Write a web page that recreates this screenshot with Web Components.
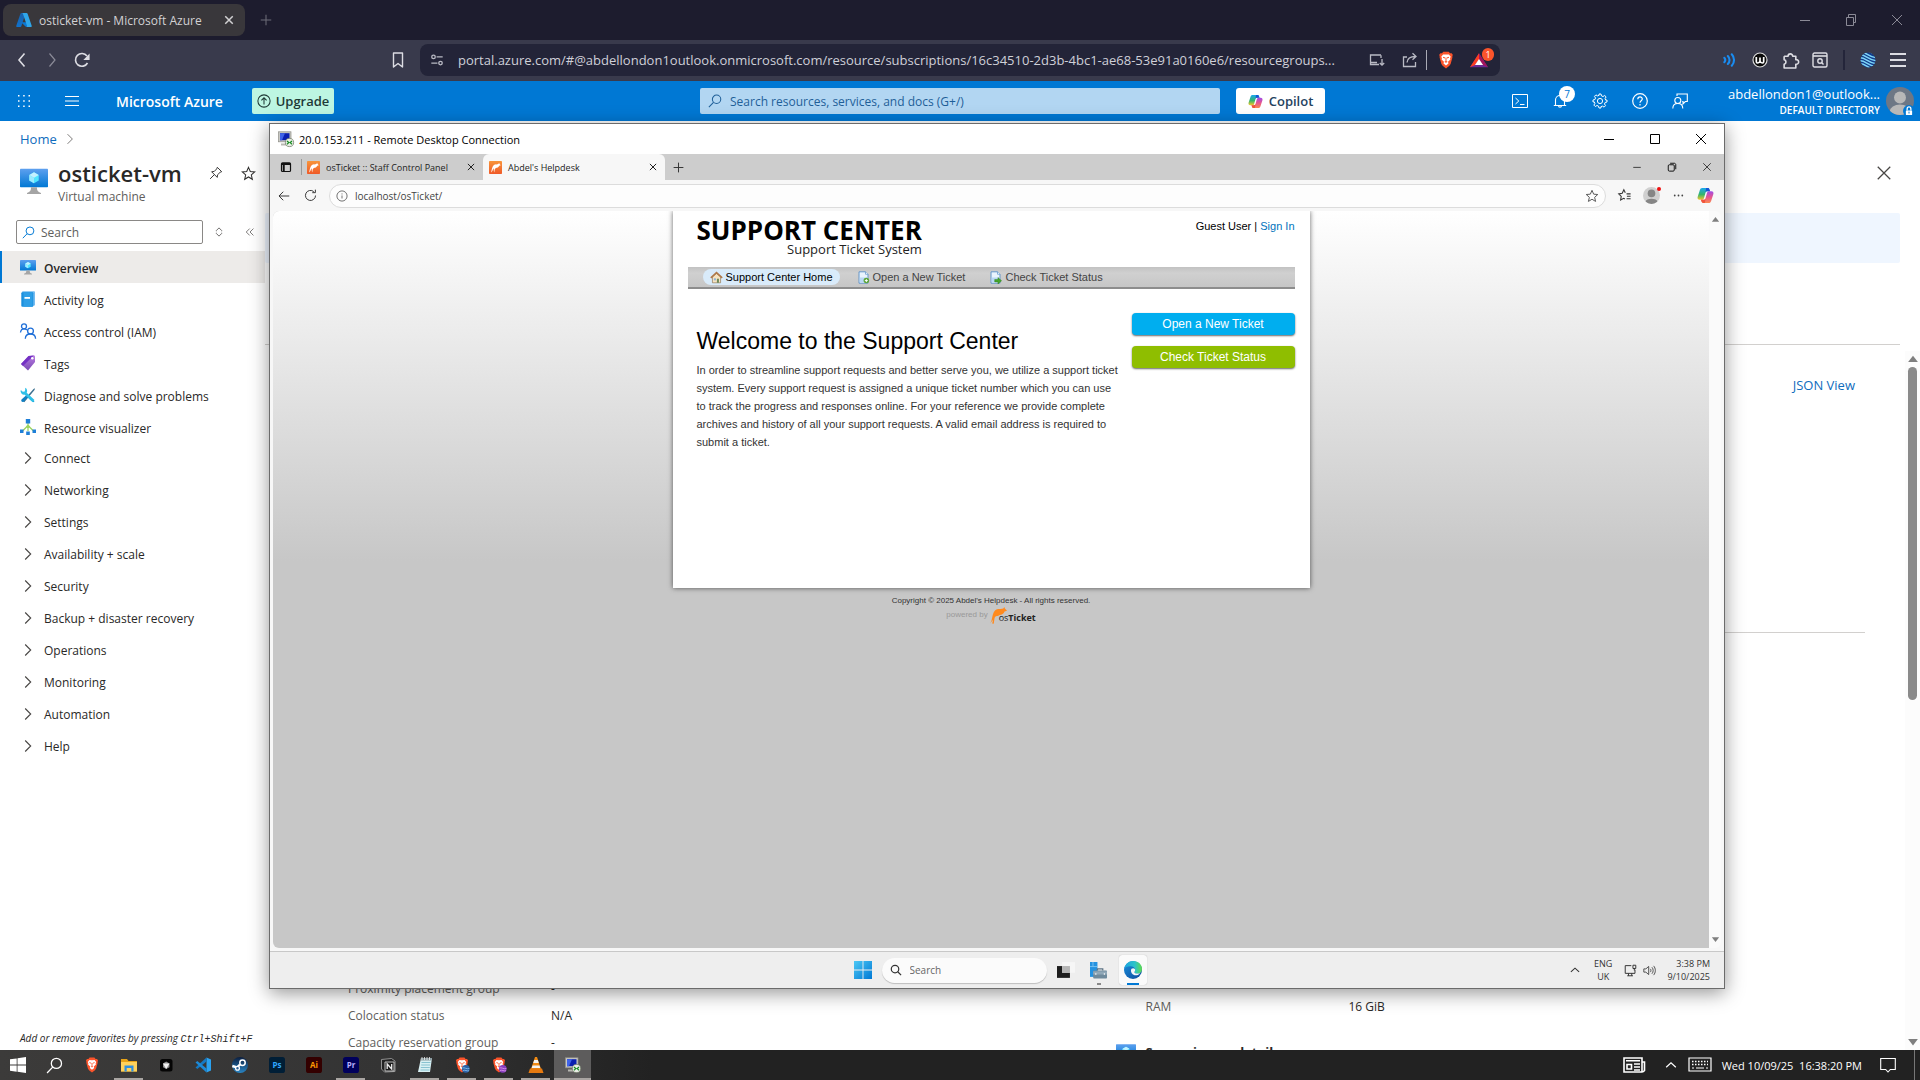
<!DOCTYPE html>
<html lang="en">
<head>
<meta charset="utf-8">
<title>osticket-vm - Microsoft Azure</title>
<style>
  html, body { margin: 0; height: 100%; }
  body { font-family: "Open Sans", "Noto Sans", sans-serif; font-size: 12px; color: #292827; overflow: hidden; background: #fff; }
</style>
</head>
<body>
<desktop-screen></desktop-screen>
<script>
const RESET = `
  *, *::before, *::after { box-sizing: border-box; }
  button, input { font: inherit; color: inherit; background: none; border: 0; padding: 0; margin: 0; outline: 0; }
  button { display: inline-flex; align-items: center; justify-content: center; flex: none; }
  input { min-width: 0; text-overflow: ellipsis; }
  a { color: inherit; text-decoration: none; }
  ul { list-style: none; margin: 0; padding: 0; }
  h1, h2, p, dl, dd, dt { margin: 0; font-weight: inherit; font-size: inherit; }
`;
function define(name, markup, setup) {
  const template = document.createElement('template');
  template.innerHTML = `<style>${RESET}</style>${markup}`;
  customElements.define(name, class extends HTMLElement {
    constructor() {
      super();
      this.attachShadow({ mode: 'open' }).append(template.content.cloneNode(true));
    }
    connectedCallback() { if (setup) setup(this, this.shadowRoot); }
  });
}

/* ---------- icons ---------- */
const line = (d, w = 1, vb = 16, extra = '') => `<svg viewBox="0 0 ${vb} ${vb}" fill="none" stroke="currentColor" stroke-width="${w}" ${extra}>${d}</svg>`;
const art = (d, vb = 16) => `<svg viewBox="0 0 ${vb} ${vb}">${d}</svg>`;
const LION = `<path d="M8 .6 10.4.6 11.6 2 13 1.9 14 3.3 13.6 5 13.7 5.8 12.1 11.6 11 13.2 8 15.5 5 13.2 3.9 11.6 2.3 5.8 2.4 5 2 3.3 3 1.9 4.4 2 5.6.6z" fill="#fb542b"/><path d="M8 3.2 10.6 3 12.2 5 11.6 6.4 11.9 7.6 9.8 9.6 10.2 11 8 12.8 5.8 11 6.2 9.6 4.1 7.6 4.4 6.4 3.8 5 5.4 3z" fill="#fff"/><path d="M5.4 5.6 7.2 6.2M10.6 5.6 8.8 6.2M8 6v3M6.9 9.3 8 10l1.1-.7" stroke="#fb542b" stroke-width=".9" fill="none"/>`;
const RDP = `<rect x=".5" y=".8" width="12.5" height="10" fill="#c9c9c4" stroke="#8f8f88" stroke-width=".7"/><rect x="2" y="2.2" width="9.5" height="7" fill="#0a1fb0"/><path d="M2 2.2h5L4 9.2H2z" fill="#3f63e8"/><path d="M3 12.5h8v2H3z" fill="#b8b8b2"/><circle cx="11.5" cy="11.5" r="4.1" fill="#e9eee6" stroke="#77806f" stroke-width=".8"/><path d="m9 10 1.8 1.6L9 13.2M14 10l-1.8 1.6 1.8 1.6" stroke="#178b22" stroke-width="1.2" fill="none"/>`;
const MONITOR = `<defs><linearGradient id="m" x1="0" y1="0" x2="0" y2="1"><stop offset="0" stop-color="#5ea0ef"/><stop offset="1" stop-color="#0078d4"/></linearGradient></defs><rect x="0" y="1" width="16" height="10.6" rx=".4" fill="url(#m)"/><path d="m8 3 2.7 1.6v3.1L8 9.3 5.3 7.7V4.6z" fill="#50e6ff"/><path d="m8 3 2.7 1.6L8 6.2 5.3 4.6z" fill="#c3f1ff"/><path d="M8 6.2v3.1L5.3 7.7V4.6z" fill="#9cebff"/><path d="M6.3 11.6h3.4c0 2 .5 2.7 2.3 3.2v.6H4v-.6c1.8-.5 2.3-1.2 2.3-3.2z" fill="#a5a5a5"/>`;
const COPILOT = `<defs><linearGradient id="a" x1="0" y1="0" x2="0" y2="1"><stop offset="0" stop-color="#1aa7ee"/><stop offset=".55" stop-color="#35b56b"/><stop offset="1" stop-color="#f4c62b"/></linearGradient><linearGradient id="b" x1="0" y1="0" x2="0" y2="1"><stop offset="0" stop-color="#a04be8"/><stop offset=".5" stop-color="#e6558e"/><stop offset="1" stop-color="#fb8a50"/></linearGradient></defs><path d="M4.9 1h5.2c.9 0 1.3.5 1.6 1.3L12.3 4H9.8c-1 0-1.5.4-1.8 1.4L6.600 10.300C6.300 11.400 5.700 12 4.600 12H2.500C.9 12 .2 10.900.6 9.400L2.700 2.900C3.100 1.700 3.700 1 4.900 1z" fill="url(#a)"/><path d="M8.600 1h1.600c.8 0 1.200.5 1.500 1.300L12.300 4H9.800C8.800 4 8.200 4.600 7.900 5.600z" fill="#1654d6"/><path d="M11.100 15H5.900c-.9 0-1.300-.5-1.600-1.300L3.700 12h2.500c1 0 1.500-.4 1.800-1.400L9.400 5.700C9.700 4.600 10.300 4 11.400 4h2.100c1.600 0 2.300 1.100 1.900 2.600l-2.100 6.500C12.900 14.300 12.300 15 11.100 15z" fill="url(#b)"/><path d="M7.400 15H5.900c-.9 0-1.300-.5-1.600-1.300L3.700 12h2.500c1 0 1.500-.4 1.900-1.500z" fill="#f0543c"/>`;
const PAGE = `<path d="M2.500 1h8l3 3v11h-11z" fill="#e9f3fd" stroke="#4b86c4"/><path d="M3.500 8h9v6h-9z" fill="#b9d8f4"/><path d="M10.500 1v3h3" fill="#fff" stroke="#4b86c4" stroke-width=".8"/>`;
const TILE = (bg, fg, t) => `<svg viewBox="0 0 16 16"><rect width="16" height="16" rx="2.600" fill="${bg}"/><text x="8" y="11.200" font-family="Open Sans" font-weight="700" font-size="8" text-anchor="middle" fill="${fg}">${t}</text></svg>`;
const STAR = 'M8 1.500l1.900 4.400 4.700.4-3.600 3.200 1.100 4.700L8 11.700l-4.100 2.500L5 9.500 1.400 6.300l4.700-.4z';
const ICONS = {
  azure: art(`<defs><linearGradient id="a" x1="0" y1="0" x2="0" y2="1"><stop offset="0" stop-color="#1b5fa8"/><stop offset="1" stop-color="#0f72cc"/></linearGradient></defs><path d="M5.400 1h4.200L5.300 14.200c-.1.500-.5.800-1 .8H1.200c-.7 0-1.100-.6-.9-1.300L4.400 1.700c.2-.4.600-.7 1-.7z" fill="url(#a)"/><path d="M11.900 10.300H5.200l4.300 4.200c.3.300.6.500 1 .5h3.300z" fill="#0a78d4"/><path d="M11.600 1.700c-.2-.4-.6-.7-1-.7H5.900c.5 0 .9.300 1 .7l4.100 12c.2.700-.2 1.300-.9 1.300h4.700c.7 0 1.100-.6.900-1.300z" fill="#2fa6ea"/>`),
  x: line('<path d="m3 3 10 10M13 3 3 13"/>', 1),
  xs: line('<path d="m3 3 10 10M13 3 3 13"/>', 1.6),
  xb: line('<path d="m3 3 10 10M13 3 3 13"/>', 2),
  plus: line('<path d="M8 2v12M2 8h12"/>', 1.2),
  min: line('<path d="M3 8.500h10"/>', 1),
  restore: line('<path d="M3.500 5.500h7v8h-7zM5.500 5.500v-3h7v8h-2"/>', 1),
  restoreR: line('<rect x="3" y="5" width="8" height="8.500" rx="1.500"/><path d="M5.500 3h5.500c1.200 0 2 .8 2 2v6"/>', 1.3),
  max: line('<path d="M3.500 3.500h9v9h-9z"/>', 1),
  back: line('<path d="M10.500 1.500 5 8l5.500 6.500"/>', 1.6),
  fwd: line('<path d="M5.500 1.500 11 8l-5.500 6.500"/>', 1.2),
  reload: line('<path d="M13.500 11A6.400 6.400 0 1 1 13 4"/><path d="M14.800 3.500v3.800h-3.600z" fill="currentColor"/>', 1.6),
  bookmark: line('<path d="M3.500 1h9v14L8 11.500 3.500 15z" stroke-linejoin="round"/>', 1.4),
  tune: line('<circle cx="4" cy="4.500" r="2"/><circle cx="12" cy="11.500" r="2"/><path d="M7.500 4.500h7M1.500 11.500h7"/>', 1.5),
  install: line('<path d="M12 3H1.500v9.500H10M4 12.500h6M1.500 10.500H8M13 7v6M10.800 11 13 13.200 15.200 11" /><path d="M12 3.300V6"/>', 1.3),
  share: line('<path d="M5 5H1.500v9.500h12V10"/><path d="M5 10.500c.3-4 3-6 8.500-6M10.500 1.300 14 4.500l-3.500 3.200"/>', 1.3),
  brave: art(LION),
  bat: art('<path d="M8 2 16 14.500H0z" fill="#6a2b94"/><path d="M8 2v5.500L4.500 12.500 0 14.500z" fill="#ff3d1f"/><path d="M8 2v5.500l3.500 5L16 14.500z" fill="#a3155c"/><path d="m8 7 3.600 5.500H4.400z" fill="#fff"/>'),
  waves: line('<path d="M1.500 5.500C3 7 3 9 1.500 10.500M5.500 3.500c2.600 2.600 2.600 6.400 0 9M10 1.500c3.500 3.800 3.500 9.200 0 13" stroke-linecap="round"/>', 2.400),
  wmark: art('<circle cx="8" cy="8" r="7" fill="#0b0b0b" stroke="#d9d9d9" stroke-width="1.200"/><path d="M4.300 5v4.500c0 2 2 2 3.700 0V5.500v4c1.700 2 3.700 2 3.700 0V5" fill="none" stroke="#fff" stroke-width="1.700"/>'),
  puzzle: line('<path d="M2 4h3.700a2.200 2.200 0 1 1 4.400 0H13v3.200a2.200 2.200 0 1 1 0 4.300v3.500H9.500M2 4v3.200a2.200 2.200 0 0 1 0 4.300V15h7.500" stroke-linejoin="round"/>', 1.5),
  find: line('<rect x="1" y="1" width="14" height="14" rx="1.500"/><path d="M1 4h14" stroke-width="1.600"/><circle cx="8" cy="9" r="2.200"/><path d="m9.600 10.600 1.900 2"/>', 1.4),
  globe: art('<defs><clipPath id="c"><circle cx="8" cy="8" r="7.500"/></clipPath></defs><g clip-path="url(#c)"><path fill="#123c8c" d="M0 0h16v16H0z"/><path d="M-1 0c5-2 9 5 18 6M-1 3c5-2 9 5 18 6M-1 6c5-2 9 5 18 6M-1 9c5-2 9 5 18 6M-1 12c5-2 9 5 18 6M3-2c5 0 9 3 14 5" stroke="#7fd6f7" stroke-width="1.500" fill="none"/></g>'),
  burger: line('<path d="M0 2h16M0 8h16M0 14h16"/>', 1.800),
  burgerThin: line('<path d="M1 3.500h14M1 8h14M1 12.500h14"/>', 1),
  waffle: art('<g fill="#fff"><path d="M2 2h1.500v1.500H2zM7.200 2h1.500v1.500H7.200zM12.500 2H14v1.500h-1.500zM2 7.200h1.500v1.500H2zM7.200 7.200h1.500v1.500H7.200zM12.500 7.200H14v1.500h-1.500zM2 12.500h1.500V14H2zM7.200 12.500h1.500V14H7.200zM12.500 12.500H14V14h-1.500z"/></g>'),
  upgrade: line('<circle cx="8" cy="8" r="7"/><path d="M8 12V4.500M5 7.300l3-3 3 3"/>', 1.2),
  search: line('<circle cx="9.800" cy="6" r="4.800"/><path d="M6.300 9.500 1 15"/>', 1.2),
  searchR: line('<circle cx="6.700" cy="6.700" r="5"/><path d="m10.300 10.300 4.500 4.500"/>', 1.6),
  copilot: art(COPILOT),
  shell: line('<path d="M.5 1.500h15v13H.5z"/><path d="m3.500 5 3.300 3-3.300 3M8 11.500h4.500"/>', 1),
  bell: line('<path d="M3.500 12.500V7a4.500 4.500 0 0 1 9 0v5.500M1.800 12.500h12.400M6.500 12.500a1.500 1.700 0 0 0 3 0"/>', 1.1),
  gear: line('<circle cx="8" cy="8" r="2.600"/><path d="m7 1h2l.5 1.900 1.500.6 1.700-1 1.400 1.400-1 1.700.6 1.500L15 7v2l-1.900.5-.6 1.500 1 1.700-1.400 1.400-1.700-1-1.500.6L9 15H7l-.5-1.900-1.500-.6-1.700 1-1.400-1.400 1-1.700-.6-1.500L1 9V7l1.900-.5.6-1.500-1-1.700 1.400-1.400 1.700 1 1.500-.6z"/>', 1),
  help: line('<circle cx="8" cy="8" r="7.300"/><path d="M5.800 6.200c0-3 4.500-3 4.500-.2 0 1.700-2.300 1.800-2.300 3.700M8 11v1.500"/>', 1.200),
  feedback: line('<circle cx="5.800" cy="7.500" r="3"/><path d="M.8 15.500c.2-6.600 9.800-6.600 10 0M5 3V1h10.300v7.500h-2L11 10.800V8.500h-.8"/>', 1.100),
  person: art('<defs><clipPath id="c"><circle cx="8" cy="8" r="8"/></clipPath></defs><g clip-path="url(#c)"><path fill="#6d7785" d="M0 0h16v16H0z"/><circle cx="8" cy="6" r="3.400" fill="#b8b8b8"/><ellipse cx="8" cy="14" rx="5.800" ry="4" fill="#b8b8b8"/></g>'),
  personGrey: art('<defs><clipPath id="c"><circle cx="8" cy="8" r="8"/></clipPath></defs><g clip-path="url(#c)"><path fill="#d0d0d0" d="M0 0h16v16H0z"/><circle cx="8" cy="6" r="3.600" fill="#868686"/><ellipse cx="8" cy="14" rx="5.500" ry="3" fill="#868686"/></g>'),
  lock: art('<rect x="3" y="7" width="10" height="7.500" rx="1" fill="#fff"/><path d="M5 7V4.500a3 3 0 0 1 6 0V7" stroke="#fff" stroke-width="2" fill="none"/><path d="M8 9v3" stroke="#0078d4" stroke-width="1.600"/>'),
  chev: line('<path d="m5.200 2.500 5.500 5.500-5.500 5.500"/>', 1.1),
  up: line('<path d="m2.500 10.500 5.500-5 5.500 5"/>', 1.4),
  vm: art(MONITOR),
  pin: line('<path d="M9.500 1.500 14.500 6.500 12.700 7.200 9.800 10l-.4 3L3 6.600l3-.4 2.800-2.900zM6 10l-4.700 4.700"/>', 1.1),
  star: line(`<path d="${STAR}"/>`, 1.1),
  favs: line('<path d="M10.500 6H15.500M11 9h4.500M10.500 12h5M9 4.500 7.200 1 5.200 5.200.9 6 4 9 3.200 13.500 7 11.500l1.500.8"/>', 1.300),
  updown: line('<path d="M4.500 6 8 2.500 11.500 6M4.500 10 8 13.500 11.500 10M4.500 6v1M11.500 6v1M4.500 9v1M11.500 9v1"/>', 1.200),
  collapse: line('<path d="M7.500 2.500 2 8l5.500 5.500M13.500 2.500 8 8l5.500 5.500"/>', 1.3),
  log: art('<path d="M2 1.500C2 .7 2.500.3 3.200.3h10.600c.8 0 1.200.5 1.200 1.200v12c0 .8-.4 1.200-1.200 1.200H13z" fill="#76bcf0"/><rect x="1.300" y="1.200" width="12" height="14.500" rx="1" fill="#1b8fdd"/><path d="M3.500 1.200h9v14.500h-9z" fill="#2f9fe6"/><path d="M4.500 6h5.500v1.800H4.500z" fill="#fff"/>'),
  iam: line('<circle cx="4" cy="3.300" r="2.500"/><circle cx="10.500" cy="8" r="2.900"/><path d="M.5 9.500C.8 6.700 2.300 5.800 4 5.800c1.300 0 2.300.5 2.900 1.200M5.300 15.700c.2-6.300 10-6.300 10.300 0"/>', 1.300),
  tag: art('<defs><linearGradient id="a" x1="0" y1="0" x2="0" y2="1"><stop offset="0" stop-color="#b87be0"/><stop offset="1" stop-color="#7a4ab5"/></linearGradient></defs><path d="M8.500 1 13.800.5c.7 0 1.200.6 1.200 1.200V7L8 15.500 1 9z" fill="url(#a)"/><path d="M8.500 1 13.800.5 3 11 1 9z" fill="#7431c4"/><circle cx="12.300" cy="3.300" r="1.200" fill="#fff"/>'),
  tools: art('<path d="m3 14 10.500-12 1.500-.8-.5 1.700L4.300 15.200z" fill="#3b6f8f"/><path d="M1.500 12.500 6 8.500l1.700 1.700-4 4.600c-1.400 1-3.200-.8-2.200-2.300z" fill="#0f80c4"/><path d="M5.500 5.500 12.500 12l2 2.700-1.500.5-3-2.500-6.500-6.500z" fill="#1fa9d8"/><path d="M5.200.8a3.500 3.500 0 0 1 1.500 4.900L14.500 13l-2 2L4.800 7.600A3.500 3.500 0 0 1 .8 3l2 1.800 1.900-.3.500-1.900z" fill="#2fc0e8"/>'),
  visual: art('<path d="M8 4v8M8 6.500 2.500 12M8 6.500 13.500 12" stroke="#9bd45f" stroke-width="1.300" fill="none"/><circle cx="8" cy="7.500" r="1.600" fill="#9bd45f"/><path d="M5.800 0h4.400v4.400H5.800zM0 10.500h3.500V14H0zM12.500 10.500H16V14h-3.500zM6.200 12.500h3.600V16H6.200z" fill="#1e7fd8"/>'),
  rdp: art(RDP),
  tabs: line('<rect x="2" y="2.500" width="12" height="11.500" rx="1.500"/><path d="M2 4h12M5 4v10" stroke-width="2.600"/>', 1.6),
  roo: art('<defs><linearGradient id="a" x1="0" y1="0" x2="0" y2="1"><stop offset="0" stop-color="#f7943a"/><stop offset="1" stop-color="#f05a28"/></linearGradient></defs><rect width="16" height="16" rx="1" fill="url(#a)"/><path d="M2.500 14c1-2 .8-6.500 3.500-9 2-1.500 3.500-.3 5.500-1.300L12.500 2l.3 1.500 1.700 1.700-2 .7c-.6 2-2.400 2.600-4.200 2.700L7 10.500 6.500 14C5.500 12 6.200 10 5.500 9 4.500 10.500 4.500 13 2.500 14z" fill="#fff"/>'),
  arrowL: line('<path d="M15 8H1.500M7 2.300 1.300 8 7 13.700"/>', 1.3),
  reloadThin: line('<path d="M14.200 8A6.200 6.200 0 1 1 12 3.200M14 .8V4.500h-3.800"/>', 1.2),
  info: line('<circle cx="8" cy="8" r="6.800"/><path d="M8 7.300v4M8 4.600v1.300"/>', 1.1),
  dots: art('<g fill="#444"><circle cx="2.500" cy="8" r="1.300"/><circle cx="8" cy="8" r="1.300"/><circle cx="13.500" cy="8" r="1.300"/></g>'),
  triUp: art('<path d="M8 3.500 14.500 12h-13z" fill="#7f7f7f"/>'),
  triDown: art('<path d="M8 12.500 14.500 4h-13z" fill="#7f7f7f"/>'),
  home: art('<path d="M3 7v7.500h10V7L8 3z" fill="#f6e3c0" stroke="#8d7250" stroke-width=".8"/><path d="M1 8.500 8 2l7 6.500" fill="none" stroke="#b0794a" stroke-width="2"/><path d="M8.500 9.500h2.500v5H8.500z" fill="#6f8a5a"/><path d="M4.800 9h2.500v2.500H4.800z" fill="#8fb4dc"/>'),
  pageNew: art(PAGE + '<circle cx="11.500" cy="11.800" r="3.400" fill="#5da53a"/><path d="M11.500 10v3.600M9.700 11.800h3.600" stroke="#fff" stroke-width="1.200"/>'),
  pageGo: art(PAGE + '<path d="M7 10.500h4V8l4.500 4-4.500 4v-2.500H7z" fill="#45a52c" stroke="#2a7a18" stroke-width=".5"/>'),
  kangaroo: art('<path d="M0 15.500C2.500 13 1.500 7 4.500 3.500 7 .8 10 2.500 12.500 1.500L13.500 0l.5 1.500L16 3.500l-2.300.8C13 6.700 11 7.300 9 7.500L7.500 8.500C5.500 8 4.500 9 4.200 11L3.500 15.700 2 15.500 3 12z" fill="#ff8a1e"/>'),
  win11: art('<defs><linearGradient id="a" x1="0" y1="0" x2="1" y2="1"><stop offset="0" stop-color="#4cc8f5"/><stop offset="1" stop-color="#0078d4"/></linearGradient></defs><path d="M0 0h7.600v7.600H0zM8.400 0H16v7.600H8.400zM0 8.400h7.600V16H0zM8.400 8.400H16V16H8.400z" fill="url(#a)"/>'),
  taskview: art('<path d="M0 4.500h11.500V15H0z" fill="#1d1d1d"/><path d="M4.500 1H16v9.500H4.500z" fill="#f7f7f7" opacity=".85"/><path d="M4.500 4.500h7v6h-7z" fill="#b5b5b5"/>'),
  server: art('<path d="M0 0h7v14H0z" fill="#2492e0"/><path d="M0 4.300h7M2.800 0v4" stroke="#8fd0f7" stroke-width=".7"/><path d="M7 8V6.500h5V8" fill="none" stroke="#5e7485" stroke-width="1.200"/><rect x="3" y="8" width="13" height="7.500" rx=".8" fill="#6f8a9c"/><path d="M3 8.800h13v3H3z" fill="#90a8b8"/><path d="M5.500 10.500v1.500M13.500 10.500v1.500" stroke="#fff"/>'),
  edge: art('<defs><linearGradient id="a" x1="0" y1="0" x2="1" y2="0"><stop offset="0" stop-color="#1aa3e0"/><stop offset=".6" stop-color="#2cc3c8"/><stop offset="1" stop-color="#5fdc4c"/></linearGradient><linearGradient id="b" x1="0" y1="0" x2="1" y2="1"><stop offset="0" stop-color="#1a8fdc"/><stop offset="1" stop-color="#0c4a9c"/></linearGradient></defs><circle cx="8" cy="8" r="8" fill="url(#b)"/><path d="M.2 7C1 2.800 4.200 0 8 0c4.700 0 8 3.200 8 7 0 2.600-1.800 4.200-4.200 4.200-1.600 0-2.600-.6-2.600-1.200 0-.5.700-.8.700-2 0-1.800-1.800-3.300-4.300-3.300C3 4.700 1 5.700.2 7z" fill="url(#a)"/><path d="M6.200 8.500c0-1.200.8-2 2-2 .9 0 1.700.7 1.700 1.500 0 1.200-.7 1.500-.7 2 0 .6 1 1.200 2.600 1.200 1 0 1.900-.3 2.600-.8-1 2-2.700 2.300-4.200 2.300-2.200 0-4-1.900-4-4.200z" fill="#f4f6f8"/>'),
  net: line('<path d="M9 2H1.500v9.500h12V7M4 14.500h7M5.500 11.500v3M9.500 11.500v3M11 1.500h3.500v4H11zM12.700 5.500V8"/>', 1.2),
  sound: line('<path d="M1 6v4h2.500L7 13V3L3.500 6zM9 6c1 1.200 1 2.800 0 4M11 4c2 2.200 2 5.800 0 8M13 2.300c2.900 3 2.900 8.400 0 11.400"/>', 1),
  win10: art('<path d="M0 2.300 6.700 1.400v6.200H0zM7.500 1.300 16 0v7.600H7.500zM0 8.400h6.700v6.300L0 13.700zM7.500 8.400H16V16l-8.500-1.200z" fill="#fff"/>'),
  explorer: art('<path d="M0 2h6l1.500 2H16v10.500H0z" fill="#e8a317"/><path d="M0 5h16v9.500H0z" fill="#ffd25c"/><path d="M3.500 8.500h9v6h-2.200V11H5.700v3.500H3.500z" fill="#2f8fe0"/>'),
  cube: art('<rect x="2" y="2" width="12.500" height="12.500" rx="2.500" fill="#050505"/><path d="m8.200 4.500 3.300 1.900v3.800L8.200 12 5 10.200V6.400z" fill="#8d8d8d"/><path d="M5 6.400h6.500L8.200 12z" fill="#f2f2f2"/>'),
  vscode: art('<path d="M11.500.5 16 2.500v11l-4.500 2z" fill="#2aa2f0"/><path d="M11.500.5v4L2.300 12 .5 10.500z" fill="#1479c4"/><path d="M11.500 15.500v-4L2.300 4 .5 5.500z" fill="#1c8ad8"/>'),
  steam: art('<defs><linearGradient id="a" x1="0" y1="0" x2="0" y2="1"><stop offset="0" stop-color="#0b1e3f"/><stop offset="1" stop-color="#2a86c4"/></linearGradient></defs><circle cx="8" cy="8" r="8" fill="url(#a)"/><path d="M.3 9 5 10.500l3-3" stroke="#fff" stroke-width="2.400" fill="none"/><circle cx="10.500" cy="5.800" r="2.700" fill="none" stroke="#fff" stroke-width="1.500"/><circle cx="5.500" cy="11.300" r="1.900" fill="#2a5f95" stroke="#fff" stroke-width="1.300"/>'),
  ps: TILE('#001e36', '#31a8ff', 'Ps'),
  ai: TILE('#330000', '#ff9a00', 'Ai'),
  pr: TILE('#00005b', '#b7b1ff', 'Pr'),
  notion: art('<path d="M1.500 2.500 11.500 1.500 15 4v10.500L4.500 15 1.500 12z" fill="#222" stroke="#aaa" stroke-width=".8"/><path d="M5 5h9v9H5z" fill="#1a1a1a" stroke="#ccc" stroke-width=".9"/><path d="M7.200 12V7l4.500 5V7" fill="none" stroke="#eee" stroke-width="1.300"/>'),
  notepad: art('<path d="M4 1h11l-2 14H1z" fill="#d8f0f3"/><path d="M4 1h11l-.4 2.500H3.600z" fill="#8a9ba0"/><path d="m4.500 5.500 9-.0M4.200 8h9M3.800 10.500h9M3.500 13h9" stroke="#7fbccc" stroke-width=".9"/><path d="M5 0v3M7.500 0v3M10 0v3M12.500 0v3" stroke="#eee" stroke-width=".8"/>'),
  braveBlue: art(LION + '<circle cx="11.800" cy="11.800" r="3.900" fill="#2b62a8"/><path d="M8.500 11c2-1 4 1.500 6.800.5M9 13.500c2-1 4 1 6 .2" stroke="#8ec5f2" fill="none" stroke-width=".8"/>'),
  bravePurple: art(LION + '<circle cx="11.800" cy="11.800" r="3.900" fill="#8a3fc0"/><path d="M8.500 11c2-1 4 1.500 6.800.5M9 13.500c2-1 4 1 6 .2" stroke="#e19af0" fill="none" stroke-width=".8"/>'),
  vlc: art('<path d="M7 0h2l4 12H3z" fill="#f08a14"/><path d="M6.200 3h3.600l1 3H5.200zM4.500 8.500h7l.8 2.500H3.700z" fill="#f3f3f3"/><path d="M2 11.500h12l1.500 4.500H.5z" fill="#e67a10"/>'),
  news: line('<path d="M2 3h18v14H2zM20 7h2.500v8.500L21 17"/><path d="M4 5.800h14M12 9h6M12 12h6M12 15h6" stroke-width="1.500"/><path d="M5 9.500h4.500V14H5z"/>', 1.6, 24, 'transform="translate(0 2)"'),
  keyboard: line('<path d="M1 5h22v13H1z"/><path d="M4 8.500h16M4 11.500h16" stroke-dasharray="1.500 1.500" stroke-width="1.500"/><path d="M4 15h2M8 15h8M18 15h2"/>', 1.200, 24),
  note: line('<path d="M.7 1.500h14.600v11h-5L8 15l-2.300-2.500h-5z"/>', 1.1)
};
define('ui-icon', `<style>:host{display:block;flex:none;width:var(--s,16px);height:var(--s,16px)} span{display:contents} svg{display:block;width:100%;height:100%;overflow:visible}</style><span aria-hidden="true"></span>`,
  (el, root) => { root.querySelector('span').innerHTML = ICONS[el.getAttribute('name')] || ''; });

/* ---------- host browser ---------- */
define('browser-tabs', `
<style>
  :host { display: flex; align-items: center; height: 40px; padding-left: 3px; background: #1d1c2e; color: #8b8a96; }
  .tab { display: flex; align-items: center; gap: 7px; width: 242px; height: 32px; padding: 0 10px 0 13px; border-radius: 8px; background: #39373b; color: #d2d1d3; }
  .tab span { flex: 1; white-space: nowrap; }
  .new { width: 42px; color: #6d6c78; }
  .win { margin-left: auto; display: flex; }
  .win button { width: 46px; height: 40px; }
</style>
<div class="tab"><ui-icon name="azure"></ui-icon><span>osticket-vm - Microsoft Azure</span><button aria-label="Close tab"><ui-icon name="xb" style="--s:12px"></ui-icon></button></div>
<button class="new" aria-label="New tab"><ui-icon name="plus" style="--s:14px"></ui-icon></button>
<div class="win">
  <button aria-label="Minimise"><ui-icon name="min"></ui-icon></button>
  <button aria-label="Restore"><ui-icon name="restore"></ui-icon></button>
  <button aria-label="Close"><ui-icon name="x"></ui-icon></button>
</div>`);

define('browser-toolbar', `
<style>
  :host { display: flex; align-items: flex-start; height: 41px; padding-top: 4px; background: #393a4c; color: #dddde3; }
  .side { flex: 0 0 420px; display: flex; align-items: center; padding: 0 7px; }
  .side button { width: 30px; height: 32px; }
  .left button:last-child { margin-left: auto; }
  .right { justify-content: flex-end; }
  .dim { color: #8b8b98; }
  .blue { color: #1a8cf0; }
  .sep { width: 2px; height: 20px; margin: 0 8px; background: #24253a; }
  .bar { flex: 1; display: flex; align-items: center; height: 32px; padding: 0 5px 0 0; border-radius: 8px; background: #232438; }
  .bar input { flex: 1; margin-left: 5px; font-size: 13px; color: #cfd0d8; }
  .bar button { width: 33px; height: 32px; color: #b9bac4; }
  .bar .rule { width: 1px; height: 20px; margin-right: 2px; background: #a9aab4; }
  .bat { position: relative; }
  .bat b { position: absolute; right: 1px; top: 4px; width: 12px; height: 13px; border-radius: 6px; background: #fb542b; color: #fff; font-size: 9px; line-height: 13px; font-weight: 400; }
</style>
<div class="side left">
  <button aria-label="Back"><ui-icon name="back"></ui-icon></button>
  <button class="dim" aria-label="Forward"><ui-icon name="fwd"></ui-icon></button>
  <button aria-label="Reload"><ui-icon name="reload"></ui-icon></button>
  <button aria-label="Bookmark"><ui-icon name="bookmark"></ui-icon></button>
</div>
<div class="bar">
  <button aria-label="Site settings"><ui-icon name="tune" style="--s:14px"></ui-icon></button>
  <input aria-label="Address" value="portal.azure.com/#@abdellondon1outlook.onmicrosoft.com/resource/subscriptions/16c34510-2d3b-4bc1-ae68-53e91a0160e6/resourcegroups...">
  <button aria-label="Install"><ui-icon name="install"></ui-icon></button>
  <button aria-label="Share"><ui-icon name="share"></ui-icon></button>
  <span class="rule"></span>
  <button aria-label="Shields"><ui-icon name="brave" style="--s:18px"></ui-icon></button>
  <button class="bat" aria-label="Rewards"><ui-icon name="bat" style="--s:18px"></ui-icon><b>1</b></button>
</div>
<div class="side right">
  <button class="blue" aria-label="Reader"><ui-icon name="waves" style="--s:14px"></ui-icon></button>
  <button aria-label="Extension"><ui-icon name="wmark"></ui-icon></button>
  <button aria-label="Extensions"><ui-icon name="puzzle" style="--s:17px"></ui-icon></button>
  <button aria-label="Find"><ui-icon name="find"></ui-icon></button>
  <span class="sep"></span>
  <button aria-label="Profile"><ui-icon name="globe"></ui-icon></button>
  <button aria-label="Menu"><ui-icon name="burger"></ui-icon></button>
</div>`);

/* ---------- Azure portal ---------- */
define('azure-header', `
<style>
  :host { display: grid; grid-template-columns: 1fr 520px 1fr; align-items: center; height: 40px; background: #0078d4; color: #fff; }
  div { display: flex; align-items: center; }
  .nav { width: 48px; height: 40px; }
  .brand { width: 156px; padding-left: 20px; font-size: 14px; font-weight: 600; white-space: nowrap; }
  .up { gap: 5px; width: 82px; height: 26px; border-radius: 2px; background: #bdf6e2; color: #1f3a36; font-size: 13px; font-weight: 600; }
  .find { height: 26px; gap: 8px; padding: 0 8px; border-radius: 2px; background: #b2d6f2; color: #1f5f98; }
  .find input { flex: 1; }
  .find input::placeholder, .find input { color: #1f5f98; opacity: 1; }
  .cop { margin: 0 auto 0 16px; gap: 6px; width: 89px; height: 26px; border-radius: 3px; background: #fff; color: #24425f; font-size: 13px; font-weight: 600; }
  .ico { width: 40px; height: 40px; position: relative; }
  .ico b { position: absolute; left: 19px; top: 5px; width: 16px; height: 16px; border-radius: 8px; background: #fff; color: #0078d4; font-size: 10px; line-height: 16px; font-weight: 400; }
  .who { display: block; width: 180px; text-align: right; font-size: 13px; line-height: 18px; white-space: nowrap; }
  .who small { display: block; font-size: 10px; line-height: 14px; font-weight: 600; }
  .ava { position: relative; width: 28px; height: 28px; margin: 0 6px; }
  .ava i { position: absolute; right: -1px; bottom: -2px; padding: 1px; border-radius: 7px; background: #0078d4; }
</style>
<div>
  <button class="nav" aria-label="Apps"><ui-icon name="waffle"></ui-icon></button>
  <button class="nav" aria-label="Menu"><ui-icon name="burgerThin"></ui-icon></button>
  <a class="brand" href="#">Microsoft Azure</a>
  <button class="up"><ui-icon name="upgrade" style="--s:14px"></ui-icon>Upgrade</button>
</div>
<div class="find"><ui-icon name="search" style="--s:14px"></ui-icon><input aria-label="Search resources" placeholder="Search resources, services, and docs (G+/)"></div>
<div>
  <button class="cop"><ui-icon name="copilot" style="--s:15px"></ui-icon>Copilot</button>
  <button class="ico" aria-label="Cloud Shell"><ui-icon name="shell"></ui-icon></button>
  <button class="ico" aria-label="Notifications"><ui-icon name="bell"></ui-icon><b>7</b></button>
  <button class="ico" aria-label="Settings"><ui-icon name="gear"></ui-icon></button>
  <button class="ico" aria-label="Help"><ui-icon name="help"></ui-icon></button>
  <button class="ico" aria-label="Feedback"><ui-icon name="feedback"></ui-icon></button>
  <span class="who">abdellondon1@outlook...<small>DEFAULT DIRECTORY</small></span>
  <button class="ava" aria-label="Account"><ui-icon name="person" style="--s:28px"></ui-icon><i><ui-icon name="lock" style="--s:10px"></ui-icon></i></button>
</div>`);

define('menu-item', `
<style>
  :host { display: block; }
  a { display: flex; align-items: center; gap: 8px; height: 32px; padding-left: 20px; white-space: nowrap; }
  span { padding-top: 2px; }
  :host([group]) a { padding-bottom: 2px; }
  :host([group]) span { padding-top: 0; }
  :host([group]) ui-icon { color: #484644; }
  :host([icon=iam]) ui-icon { color: #1f6fd8; }
  :host([current]) a { padding-left: 18px; border-left: 2px solid #0078d4; background: #edebe9; font-weight: 600; }
</style>
<a href="#"><ui-icon></ui-icon><span><slot></slot></span></a>`,
  (el, root) => root.querySelector('ui-icon').replaceWith(Object.assign(document.createElement('template'), { innerHTML: `<ui-icon name="${el.getAttribute('icon') || 'chev'}"></ui-icon>` }).content));

define('azure-sidebar', `
<style>
  :host { display: flex; flex-direction: column; width: 265px; }
  .crumb { display: flex; align-items: center; gap: 6px; height: 36px; padding-left: 20px; font-size: 13px; color: #0f6cbd; }
  .crumb ui-icon { color: #797775; }
  .head { display: flex; align-items: center; gap: 10px; height: 48px; padding-left: 20px; }
  h1 { font-size: 22px; line-height: 32px; font-weight: 600; white-space: nowrap; }
  .sub { line-height: 16px; color: #605e5c; }
  .acts { display: flex; align-self: flex-start; margin: 0 1px 0 auto; }
  .acts button { width: 32px; height: 32px; color: #323130; }
  .find { display: flex; align-items: center; height: 24px; margin: 15px 0 7px 16px; color: #605e5c; }
  label { display: flex; align-items: center; gap: 6px; width: 187px; height: 24px; padding: 0 5px; border: 1px solid #8a8886; border-radius: 2px; }
  label ui-icon { color: #0078d4; }
  input { flex: 1; }
  input::placeholder { color: #605e5c; opacity: 1; }
  .find button { width: 31px; height: 24px; }
  .tip { margin-top: auto; padding: 0 0 2px 20px; font-size: 10px; line-height: 16px; font-style: italic; white-space: nowrap; }
  kbd { font-family: "Liberation Mono", monospace; font-size: 10px; }
</style>
<nav class="crumb"><a href="#">Home</a><ui-icon name="chev" style="--s:14px"></ui-icon></nav>
<div class="head">
  <ui-icon name="vm" style="--s:28px"></ui-icon>
  <div><h1>osticket-vm</h1><p class="sub">Virtual machine</p></div>
  <div class="acts"><button aria-label="Pin"><ui-icon name="pin" style="--s:14px"></ui-icon></button><button aria-label="Favourite"><ui-icon name="star" style="--s:15px"></ui-icon></button></div>
</div>
<div class="find">
  <label><ui-icon name="search" style="--s:13px"></ui-icon><input aria-label="Search menu" placeholder="Search"></label>
  <button aria-label="Expand all"><ui-icon name="updown" style="--s:12px"></ui-icon></button>
  <button aria-label="Collapse"><ui-icon name="collapse" style="--s:10px"></ui-icon></button>
</div>
<nav>
  <menu-item current icon="vm">Overview</menu-item>
  <menu-item icon="log">Activity log</menu-item>
  <menu-item icon="iam">Access control (IAM)</menu-item>
  <menu-item icon="tag">Tags</menu-item>
  <menu-item icon="tools">Diagnose and solve problems</menu-item>
  <menu-item icon="visual">Resource visualizer</menu-item>
  <menu-item group>Connect</menu-item>
  <menu-item group>Networking</menu-item>
  <menu-item group>Settings</menu-item>
  <menu-item group>Availability + scale</menu-item>
  <menu-item group>Security</menu-item>
  <menu-item group>Backup + disaster recovery</menu-item>
  <menu-item group>Operations</menu-item>
  <menu-item group>Monitoring</menu-item>
  <menu-item group>Automation</menu-item>
  <menu-item group>Help</menu-item>
</nav>
<p class="tip">Add or remove favorites by pressing <kbd>Ctrl+Shift+F</kbd></p>`);

define('azure-main', `
<style>
  :host { display: flex; flex-direction: column; flex: 1; min-width: 0; }
  header { display: flex; justify-content: flex-end; align-items: center; height: 92px; padding: 12px 20px 0 0; color: #484644; }
  header button { width: 32px; height: 32px; }
  .note { height: 50px; margin-right: 20px; border-radius: 2px; background: #eff6ff; }
  .tabs { height: 82px; margin-right: 20px; border-bottom: 1px solid #d2d0ce; }
  .pane { flex: 1; display: flex; min-height: 0; margin-top: 6px; }
  .body { flex: 1; overflow: hidden; padding-left: 53px; }
  .ess { height: 282px; margin-right: 40px; padding: 25px 10px 0 0; text-align: right; font-size: 13px; border-bottom: 1px solid #d2d0ce; }
  .ess a { color: #0f6cbd; }
  .props { display: grid; grid-template-columns: 1fr 1fr; column-gap: 8px; align-items: start; padding-top: 342px; line-height: 27px; }
  dl { display: grid; grid-template-columns: 203px 1fr; padding-left: 30px; }
  dt { color: #605e5c; }
  .size { padding-top: 18px; }
  h2 { display: flex; align-items: flex-start; gap: 10px; padding-top: 23px; font-size: 13px; line-height: 18px; font-weight: 700; }
  .bar { display: flex; flex-direction: column; align-items: center; width: 15px; padding: 2px 0; background: #fcfcfc; }
  .bar i { width: 9px; height: 333px; margin: 2px 0 auto; border-radius: 5px; background: #8a8a8a; }
</style>
<header><button aria-label="Close"><ui-icon name="x" style="--s:20px"></ui-icon></button></header>
<div class="note"></div>
<div class="tabs"></div>
<div class="pane">
  <div class="body">
    <div class="ess"><a href="#">JSON View</a></div>
    <div class="props">
      <dl><dt>Proximity placement group</dt><dd>-</dd><dt>Colocation status</dt><dd>N/A</dd><dt>Capacity reservation group</dt><dd>-</dd></dl>
      <div class="size"><dl><dt>RAM</dt><dd>16 GiB</dd></dl><h2><ui-icon name="vm" style="--s:20px"></ui-icon>Source image details</h2></div>
    </div>
  </div>
  <div class="bar"><ui-icon name="triUp" style="--s:12px"></ui-icon><i></i><ui-icon name="triDown" style="--s:12px"></ui-icon></div>
</div>`);

/* ---------- remote desktop window ---------- */
define('edge-tab', `
<style>
  :host { display: flex; align-items: center; gap: 6px; width: 182px; height: 26px; padding: 0 5px 0 6px; border-radius: 6px 6px 0 0; font-size: 9px; color: #222; white-space: nowrap; }
  :host([active]) { background: #f7f7f7; }
  span { flex: 1; }
  button { width: 14px; height: 14px; }
</style>
<ui-icon name="roo" style="--s:13px"></ui-icon><span><slot></slot></span><button aria-label="Close tab"><ui-icon name="xs" style="--s:10px"></ui-icon></button>`);

define('edge-browser', `
<style>
  :host { display: flex; flex-direction: column; flex: 1; min-height: 0; background: #f7f7f7; color: #333; }
  .tabs { display: flex; align-items: center; height: 26px; background: #cdcdcd; }
  .ws { width: 31px; color: #111; }
  .rule { width: 1px; height: 16px; margin-right: -1px; background: #999; }
  .new { width: 26px; }
  .win { margin-left: auto; display: flex; }
  .win button { width: 35px; height: 26px; color: #111; }
  .tools { display: flex; align-items: center; height: 31px; padding-right: 5px; }
  .tools > button { width: 27px; height: 27px; }
  .pill { flex: 1; display: flex; align-items: center; height: 24px; margin: 0 5px; padding: 0 6px; border: 1px solid #dcdcdc; border-radius: 12px; background: #fdfdfd; color: #555; }
  .pill input { flex: 1; margin-left: 7px; font-size: 10px; color: #444; }
  .me { position: relative; }
  .me i { position: absolute; right: 4px; top: 5px; width: 4px; height: 4px; border-radius: 2px; background: #e11; }
  .view { flex: 1; display: flex; min-height: 0; margin: 0 3px 3px; border-radius: 6px; overflow: hidden; }
  .page { flex: 1; background: #c7c7c7 linear-gradient(#fff, #c7c7c7) 0 0 / 100% 350px no-repeat; }
  .bar { display: flex; flex-direction: column; justify-content: space-between; align-items: center; width: 12px; padding: 4px 0; background: #fafafa; }
</style>
<div class="tabs">
  <button class="ws" aria-label="Tab actions"><ui-icon name="tabs" style="--s:12px"></ui-icon></button>
  <span class="rule"></span>
  <edge-tab>osTicket :: Staff Control Panel</edge-tab>
  <edge-tab active>Abdel's Helpdesk</edge-tab>
  <button class="new" aria-label="New tab"><ui-icon name="plus" style="--s:13px"></ui-icon></button>
  <div class="win"><button aria-label="Minimise"><ui-icon name="min" style="--s:12px"></ui-icon></button><button aria-label="Restore"><ui-icon name="restoreR" style="--s:12px"></ui-icon></button><button aria-label="Close"><ui-icon name="x" style="--s:12px"></ui-icon></button></div>
</div>
<div class="tools">
  <button aria-label="Back"><ui-icon name="arrowL" style="--s:12px"></ui-icon></button>
  <button aria-label="Refresh"><ui-icon name="reloadThin" style="--s:13px"></ui-icon></button>
  <div class="pill"><ui-icon name="info" style="--s:12px"></ui-icon><input aria-label="Address" value="localhost/osTicket/"><ui-icon name="star" style="--s:14px"></ui-icon></div>
  <button aria-label="Favourites"><ui-icon name="favs" style="--s:13px"></ui-icon></button>
  <button class="me" aria-label="Profile"><ui-icon name="personGrey" style="--s:17px"></ui-icon><i></i></button>
  <button aria-label="More"><ui-icon name="dots" style="--s:11px"></ui-icon></button>
  <button aria-label="Copilot"><ui-icon name="copilot" style="--s:17px"></ui-icon></button>
</div>
<div class="view">
  <div class="page"><slot></slot></div>
  <div class="bar"><ui-icon name="triUp" style="--s:9px"></ui-icon><ui-icon name="triDown" style="--s:9px"></ui-icon></div>
</div>`);

define('support-center', `
<style>
  :host { display: block; font-family: "Liberation Sans", Arial, sans-serif; font-size: 11px; color: #000; }
  main { width: 637px; height: 377px; margin: 0 auto; padding: 0 15px; background: #fff; box-shadow: 0 0 5px rgba(0,0,0,.6); }
  header { display: flex; justify-content: space-between; height: 56px; padding: 7px 0 0 9px; }
  .logo { font-family: "Open Sans", sans-serif; text-align: right; font-size: 13px; line-height: 14px; color: #222; }
  .logo b { display: block; font-size: 26px; line-height: 24px; color: #000; font-weight: 700; }
  .user { line-height: 16px; }
  .user a { color: #0072bc; }
  nav { display: flex; align-items: center; gap: 10px; height: 22px; padding: 0 15px; background: linear-gradient(#c2c2c2, #d0d0d0 30%, #c6c6c6); border-bottom: 2px solid #8d8d8d; }
  nav a { display: flex; align-items: center; gap: 3px; height: 16px; padding: 0 7px; border-radius: 8px; color: #444; }
  nav a.on { background: #d9ebfa; color: #000; }
  .cols { display: flex; justify-content: space-between; padding: 24px 0 0 9px; }
  .text { padding-top: 14px; white-space: nowrap; }
  h1 { font-size: 23px; line-height: 28px; }
  p { margin-top: 6px; line-height: 18px; color: #333; }
  .acts { display: flex; flex-direction: column; gap: 11px; width: 163px; }
  .acts a { height: 22px; line-height: 22px; border-radius: 4px; text-align: center; font-size: 12px; color: #fff; background: #00aeef; box-shadow: 0 1px 2px rgba(0,0,0,.6); }
  .acts a + a { background: #8fbe00; }
  footer { padding-top: 7px; text-align: center; font-size: 8px; line-height: 12px; color: #333; }
  footer div { display: flex; justify-content: center; align-items: center; height: 16px; color: #999; }
  footer ui-icon { margin: 0 -8px 0 2px; align-self: flex-start; }
  footer b { font-family: "Open Sans", sans-serif; font-size: 9px; color: #222; padding-top: 5px; }
  footer b span { font-weight: 400; }
</style>
<main>
  <header><div class="logo"><b>SUPPORT CENTER</b>Support Ticket System</div><div class="user">Guest User | <a href="#">Sign In</a></div></header>
  <nav><a class="on" href="#"><ui-icon name="home" style="--s:13px"></ui-icon>Support Center Home</a><a href="#"><ui-icon name="pageNew" style="--s:13px"></ui-icon>Open a New Ticket</a><a href="#"><ui-icon name="pageGo" style="--s:13px"></ui-icon>Check Ticket Status</a></nav>
  <div class="cols">
    <div class="text"><h1>Welcome to the Support Center</h1><p>In order to streamline support requests and better serve you, we utilize a support ticket<br>system. Every support request is assigned a unique ticket number which you can use<br>to track the progress and responses online. For your reference we provide complete<br>archives and history of all your support requests. A valid email address is required to<br>submit a ticket.</p></div>
    <div class="acts"><a href="#">Open a New Ticket</a><a href="#">Check Ticket Status</a></div>
  </div>
</main>
<footer>Copyright © 2025 Abdel's Helpdesk - All rights reserved.<div>powered by<ui-icon name="kangaroo" style="--s:17px"></ui-icon><b><span>os</span>Ticket</b></div></footer>`);

define('remote-taskbar', `
<style>
  :host { display: grid; grid-template-columns: 1fr auto 1fr; align-items: center; height: 37px; border-top: 1px solid #c8c8c8; background: #eee; color: #333; font-size: 9px; }
  .mid { grid-column: 2; display: flex; align-items: center; gap: 10px; padding-left: 6px; }
  label { display: flex; align-items: center; gap: 8px; width: 165px; height: 25px; padding: 0 8px; border-radius: 13px; background: #fbfbfb; box-shadow: 0 1px 1px rgba(0,0,0,.2); }
  input { flex: 1; font-size: 10px; }
  input::placeholder { color: #666; opacity: 1; }
  .app { position: relative; width: 28px; height: 30px; border-radius: 3px; margin-right: -4px; }
  .app + .app { margin-right: 0; }
  .app::after { content: ""; position: absolute; bottom: 0; left: 12px; width: 4px; height: 2px; background: #888; }
  .on { background: #fafafa; box-shadow: 0 0 1px rgba(0,0,0,.3); }
  .on.app::after { left: 8px; width: 12px; background: #0078d4; }
  .tray { display: flex; align-items: center; justify-content: flex-end; padding-right: 14px; text-align: center; line-height: 13px; }
  .tray ui-icon { margin-right: 6px; }
  .lang { margin: 0 12px 0 7px; }
  .time { margin-left: 5px; text-align: right; }
</style>
<div class="mid">
  <button aria-label="Start"><ui-icon name="win11" style="--s:18px"></ui-icon></button>
  <label><ui-icon name="searchR" style="--s:12px"></ui-icon><input aria-label="Search" placeholder="Search"></label>
  <button aria-label="Task view"><ui-icon name="taskview" style="--s:18px"></ui-icon></button>
  <button class="app" aria-label="Server Manager"><ui-icon name="server" style="--s:17px"></ui-icon></button>
  <button class="app on" aria-label="Edge"><ui-icon name="edge" style="--s:18px"></ui-icon></button>
</div>
<div class="tray"><ui-icon name="up" style="--s:12px"></ui-icon><div class="lang">ENG<br>UK</div><ui-icon name="net" style="--s:13px"></ui-icon><ui-icon name="sound" style="--s:13px"></ui-icon><div class="time">3:38 PM<br>9/10/2025</div></div>`);

define('remote-window', `
<style>
  :host { display: flex; flex-direction: column; border: 1px solid #6b6b6b; background: #fff; color: #000; box-shadow: 0 4px 18px rgba(0,0,0,.42); }
  .title { display: flex; align-items: center; gap: 5px; height: 30px; padding-left: 8px; font-size: 11px; }
  .win { margin-left: auto; display: flex; }
  .win button { width: 46px; height: 30px; }
</style>
<div class="title"><ui-icon name="rdp"></ui-icon>20.0.153.211 - Remote Desktop Connection
  <div class="win"><button aria-label="Minimise"><ui-icon name="min"></ui-icon></button><button aria-label="Maximise"><ui-icon name="max"></ui-icon></button><button aria-label="Close"><ui-icon name="x"></ui-icon></button></div>
</div>
<slot></slot>`);

/* ---------- host taskbar ---------- */
define('task-bar', `
<style>
  :host { display: flex; align-items: stretch; height: 30px; background: linear-gradient(90deg, #3c3b3a, #343434 20%, #222 34%); color: #fff; font-size: 11px; }
  button { width: 37px; height: 30px; position: relative; }
  .start { width: 36px; }
  .run::after { content: ""; position: absolute; left: 4px; right: 4px; bottom: 0; height: 2px; background: #a9a5a2; }
  .run.on { background: #5d5c5c; }
  .run.on::after { left: 0; right: 0; }
  .tray { margin-left: auto; display: flex; align-items: center; gap: 18px; }
  .input { display: flex; align-items: center; gap: 10px; }
  time { white-space: pre; }
  .end { width: 1px; height: 30px; margin-right: 5px; background: #777; }
</style>
<button class="start" aria-label="Start"><ui-icon name="win10"></ui-icon></button>
<button aria-label="Search"><ui-icon name="search" style="--s:17px"></ui-icon></button>
<button aria-label="Brave"><ui-icon name="brave"></ui-icon></button>
<button class="run" aria-label="File Explorer"><ui-icon name="explorer"></ui-icon></button>
<button aria-label="Cursor"><ui-icon name="cube"></ui-icon></button>
<button aria-label="VS Code"><ui-icon name="vscode"></ui-icon></button>
<button aria-label="Steam"><ui-icon name="steam"></ui-icon></button>
<button aria-label="Photoshop"><ui-icon name="ps"></ui-icon></button>
<button aria-label="Illustrator"><ui-icon name="ai"></ui-icon></button>
<button class="run" aria-label="Premiere"><ui-icon name="pr"></ui-icon></button>
<button aria-label="Notion"><ui-icon name="notion"></ui-icon></button>
<button class="run" aria-label="Notepad"><ui-icon name="notepad"></ui-icon></button>
<button class="run" aria-label="Brave profile 1"><ui-icon name="braveBlue"></ui-icon></button>
<button class="run" aria-label="Brave profile 2"><ui-icon name="bravePurple"></ui-icon></button>
<button class="run" aria-label="VLC"><ui-icon name="vlc"></ui-icon></button>
<button class="run on" aria-label="Remote Desktop"><ui-icon name="rdp"></ui-icon></button>
<div class="tray">
  <ui-icon name="news" style="--s:24px"></ui-icon>
  <div class="input"><ui-icon name="up" style="--s:14px"></ui-icon><ui-icon name="keyboard" style="--s:24px"></ui-icon><time>Wed 10/09/25  16:38:20 PM</time></div>
  <ui-icon name="note"></ui-icon>
  <span class="end"></span>
</div>`);

define('desktop-screen', `
<style>
  :host { position: relative; display: flex; flex-direction: column; height: 100vh; }
  .portal { flex: 1; display: flex; min-height: 0; }
  remote-window { position: absolute; left: 269px; right: 195px; top: 123px; bottom: 91px; }
</style>
<browser-tabs></browser-tabs>
<browser-toolbar></browser-toolbar>
<azure-header></azure-header>
<div class="portal"><azure-sidebar></azure-sidebar><azure-main></azure-main></div>
<task-bar></task-bar>
<remote-window>
  <edge-browser><support-center></support-center></edge-browser>
  <remote-taskbar></remote-taskbar>
</remote-window>`);
</script>
</body>
</html>
